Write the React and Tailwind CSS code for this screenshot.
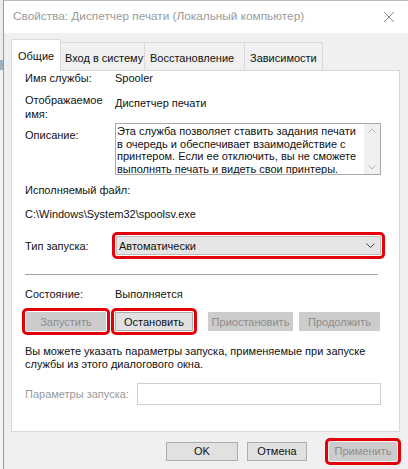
import React from 'react';

const FONT = { fontFamily: '"Liberation Sans", Arial, sans-serif' };

function Btn({ children, disabled, red, className = '' }) {
  return (
    <div
      className={`flex items-center justify-center h-[19px] border ${
        disabled ? 'bg-[#cccccc] border-[#cccccc] text-[#8c8c8c]' : 'bg-[#e1e1e1] border-[#adadad] text-[#111]'
      } ${red ? 'outline-[3px] outline-[#e3000b] outline-offset-[1px] rounded-[1px]' : ''} ${className}`}
    >
      {children}
    </div>
  );
}

export default function App() {
  return (
    <div className="w-[408px] h-[469px] flex overflow-hidden bg-[#f0f0f0] text-[11px] text-[#111]" style={FONT}>
      {/* кусок окна позади */}
      <div className="w-[3px] flex flex-col bg-[#f3f3f3]">
        <div className="h-[60px] bg-[#ececec]" />
        <div className="h-[10px] bg-[#9fb2c4]" />
        <div className="flex-1 bg-[#f3f3f3]" />
      </div>

      <div className="flex-1 flex flex-col border-l border-[#9a9a9a] border-t border-t-[#bdbdbd]">
        {/* заголовок */}
        <div className="h-[32px] bg-white flex items-center justify-between pl-[9px] pr-[12px]">
          <span className="text-[11.8px] text-[#9a9a9a]">Свойства: Диспетчер печати (Локальный компьютер)</span>
          <svg width="12" height="12" viewBox="0 0 12 12" className="mr-[1px]">
            <path d="M1 1L11 11M11 1L1 11" stroke="#8a8a8a" strokeWidth="1" />
          </svg>
        </div>

        <div className="flex-1 flex flex-col pl-[7px] pr-[8px]">
          {/* вкладки */}
          <div className="flex items-end h-[37px] pt-[5px]">
            <div className="h-[32px] w-[50px] bg-white border border-b-0 border-[#d9d9d9] pl-[6px] pt-[8px] relative z-10 -mb-[1px]">
              Общие
            </div>
            <div className="h-[28px] w-[84px] bg-[#f0f0f0] border border-l-0 border-b-0 border-[#d9d9d9] pl-[4px] pt-[7px]">
              Вход в систему
            </div>
            <div className="h-[28px] w-[100px] bg-[#f0f0f0] border border-l-0 border-b-0 border-[#d9d9d9] pl-[5px] pt-[7px]">
              Восстановление
            </div>
            <div className="h-[28px] w-[78px] bg-[#f0f0f0] border border-l-0 border-b-0 border-[#d9d9d9] pl-[5px] pt-[7px]">
              Зависимости
            </div>
          </div>

          {/* панель */}
          <div className="h-[362px] bg-white border border-[#d9d9d9] pl-[13px] pr-[18px] leading-[14px]">
            <div className="flex">
              <div className="w-[90px]">Имя службы:</div>
              <div>Spooler</div>
            </div>

            <div className="flex mt-[8px]">
              <div className="w-[90px]">Отображаемое<br />имя:</div>
              <div className="mt-[3px]">Диспетчер печати</div>
            </div>

            <div className="flex mt-[2px]">
              <div className="w-[90px] pt-[5px]">Описание:</div>
              <div className="flex-1 h-[52px] border border-[#a9a9a9] flex">
                <div className="flex-1 leading-[12.5px] pt-[1px] pl-[1px] whitespace-nowrap overflow-hidden">
                  Эта служба позволяет ставить задания печати<br />
                  в очередь и обеспечивает взаимодействие с<br />
                  принтером. Если ее отключить, вы не сможете<br />
                  выполнять печать и видеть свои принтеры.
                </div>
                <div className="w-[16px] bg-[#f0f0f0] flex flex-col items-center justify-between py-[4px]">
                  <svg width="8" height="5" viewBox="0 0 8 5"><path d="M0.5 4.5L4 1L7.5 4.5" fill="none" stroke="#b5b5b5" /></svg>
                  <svg width="8" height="5" viewBox="0 0 8 5"><path d="M0.5 0.5L4 4L7.5 0.5" fill="none" stroke="#b5b5b5" /></svg>
                </div>
              </div>
            </div>

            <div className="mt-[8px]">Исполняемый файл:</div>
            <div className="mt-[10px]">C:\Windows\System32\spoolsv.exe</div>

            <div className="flex items-center mt-[15px]">
              <div className="w-[91px]">Тип запуска:</div>
              <div className="flex-1 h-[19px] bg-[#e5e5e5] border border-[#bcbcbc] flex items-center justify-between pl-[2px] pr-[5px] outline-[3px] outline-[#e3000b] outline-offset-[1px] rounded-[1px]">
                <span>Автоматически</span>
                <svg width="9" height="5" viewBox="0 0 9 5"><path d="M0.5 0.5L4.5 4.5L8.5 0.5" fill="none" stroke="#444" /></svg>
              </div>
            </div>

            <div className="h-px bg-[#a0a0a0] mt-[19px] mr-[3px]" />

            <div className="flex mt-[12px]">
              <div className="w-[90px]">Состояние:</div>
              <div>Выполняется</div>
            </div>

            <div className="flex mt-[11px] pl-[1px]">
              <Btn disabled red className="w-[80px]">Запустить</Btn>
              <Btn red className="w-[78px] ml-[9px]">Остановить</Btn>
              <Btn disabled className="w-[85px] ml-[15px]">Приостановить</Btn>
              <Btn disabled className="w-[81px] ml-[6px]">Продолжить</Btn>
            </div>

            <div className="mt-[14px] leading-[13px] whitespace-nowrap">
              Вы можете указать параметры запуска, применяемые при запуске<br />службы из этого диалогового окна.
            </div>

            <div className="flex items-center mt-[12px]">
              <div className="w-[112px] text-[#9a9a9a]">Параметры запуска:</div>
              <div className="flex-1 h-[22px] border border-[#cfcfcf] bg-white" />
            </div>
          </div>

          {/* нижние кнопки */}
          <div className="flex justify-end mt-[10px]">
            <Btn className="w-[72px]">OK</Btn>
            <Btn className="w-[60px] ml-[9px]">Отмена</Btn>
            <Btn disabled red className="w-[68px] ml-[22px] mr-[3px]">Применить</Btn>
          </div>
        </div>
      </div>
    </div>
  );
}
